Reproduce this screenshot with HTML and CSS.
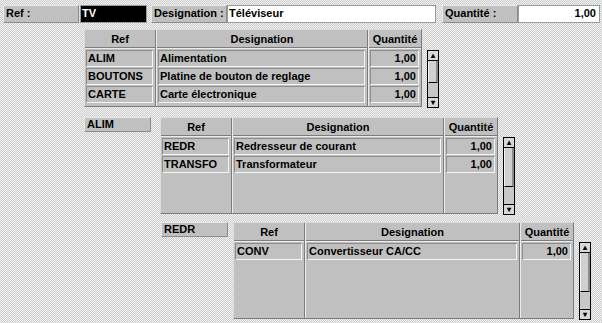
FILE: index.html
```html
<!DOCTYPE html>
<html lang="fr">
<head>
  <meta charset="UTF-8" />
  <title>Nomenclature</title>
  <link rel="stylesheet" href="styles.css">
</head>
<body>
  <div class="topbar">
    <div class="label w-ref">Ref :</div>
    <div class="field dark w-tv">TV</div>
    <div class="label w-des">Designation :</div>
    <div class="field w-desval">Téléviseur</div>
    <div class="label w-qte">Quantité :</div>
    <div class="field num w-qteval">1,00</div>
  </div>

  <!-- niveau 1 -->
  <div class="level lvl1">
    <div class="tbl t1">
      <div class="col c-ref">
        <div class="head">Ref</div>
        <div class="cell">ALIM</div>
        <div class="cell">BOUTONS</div>
        <div class="cell">CARTE</div>
      </div>
      <div class="col c-des">
        <div class="head">Designation</div>
        <div class="cell">Alimentation</div>
        <div class="cell">Platine de bouton de reglage</div>
        <div class="cell">Carte électronique</div>
      </div>
      <div class="col c-qte">
        <div class="head">Quantité</div>
        <div class="cell num">1,00</div>
        <div class="cell num">1,00</div>
        <div class="cell num">1,00</div>
      </div>
    </div>
    <div class="scroll s1">
      <div class="arrow">&#9652;</div>
      <div class="thumb"></div>
      <div class="track"></div>
      <div class="arrow">&#9662;</div>
    </div>
  </div>

  <!-- niveau 2 -->
  <div class="level lvl2">
    <div class="label tag">ALIM</div>
    <div class="tbl t2">
      <div class="col c-ref">
        <div class="head">Ref</div>
        <div class="cell">REDR</div>
        <div class="cell">TRANSFO</div>
      </div>
      <div class="col c-des">
        <div class="head">Designation</div>
        <div class="cell">Redresseur de courant</div>
        <div class="cell">Transformateur</div>
      </div>
      <div class="col c-qte">
        <div class="head">Quantité</div>
        <div class="cell num">1,00</div>
        <div class="cell num">1,00</div>
      </div>
    </div>
    <div class="scroll s2">
      <div class="arrow">&#9652;</div>
      <div class="thumb"></div>
      <div class="track"></div>
      <div class="arrow">&#9662;</div>
    </div>
  </div>

  <!-- niveau 3 -->
  <div class="level lvl3">
    <div class="label tag">REDR</div>
    <div class="tbl t3">
      <div class="col c-ref">
        <div class="head">Ref</div>
        <div class="cell">CONV</div>
      </div>
      <div class="col c-des">
        <div class="head">Designation</div>
        <div class="cell">Convertisseur CA/CC</div>
      </div>
      <div class="col c-qte">
        <div class="head">Quantité</div>
        <div class="cell num">1,00</div>
      </div>
    </div>
    <div class="scroll s2">
      <div class="arrow">&#9652;</div>
      <div class="thumb"></div>
      <div class="track"></div>
      <div class="arrow">&#9662;</div>
    </div>
  </div>
</body>
</html>
```

FILE: styles.css
```css
body {
  margin: 0;
  font-family: "Liberation Sans", Arial, sans-serif;
  font-size: 11px;
  font-weight: bold;
  color: #000;
  background: repeating-conic-gradient(#cdcdcd 0 25%, #f2f2f2 0 50%) 0 0 / 2px 2px;
  height: 323px;
  overflow: hidden;
}
.topbar {
  display: flex;
  align-items: center;
  padding: 5px 0 0 3px;
  height: 18px;
}
.label {
  box-sizing: border-box;
  height: 18px;
  line-height: 15px;
  padding-left: 2px;
  background: #c0c0c0;
  border: 1px solid;
  border-color: #e8e8e8 #8c8c8c #8c8c8c #e8e8e8;
}
.field {
  box-sizing: border-box;
  height: 18px;
  line-height: 15px;
  padding: 0 3px 0 1px;
  background: #fff;
  border: 1px solid #9a9a9a;
}
.field.dark {
  background: #000;
  color: #fff;
}
.num { text-align: right; }
.w-ref { width: 76px; }
.w-tv { width: 67px; margin-left: 1px; }
.w-des { width: 76px; margin-left: 4px; }
.w-desval { width: 209px; }
.w-qte { width: 76px; margin-left: 6px; }
.w-qteval { width: 82px; }

.level {
  display: flex;
  align-items: flex-start;
}
.lvl1 { margin: 6px 0 0 84px; }
.lvl2 { margin: 9px 0 0 84px; }
.lvl3 { margin: 7px 0 0 161px; }
.tag {
  width: 67px;
  height: 15px;
  line-height: 12px;
  margin-right: 9px;
}
.lvl3 .tag { margin-right: 5px; }

.tbl {
  display: flex;
  background: #c0c0c0;
  border: 1px solid;
  border-color: #dcdcdc #7c7c7c #7c7c7c #dcdcdc;
}
.t1 { height: 76px; }
.t2, .t3 { height: 95px; }
.col {
  display: flex;
  flex-direction: column;
}
.col + .col {
  border-left: 1px solid #7c7c7c;
  box-shadow: inset 1px 0 #ececec;
  padding-left: 1px;
}
.c-ref { width: 70px; }
.c-des { width: 210px; }
.c-qte { width: 52px; }
.t3 .c-des { width: 213px; }
.head {
  height: 17px;
  line-height: 18px;
  text-align: center;
  border-bottom: 1px solid #7c7c7c;
  box-shadow: 0 1px #ececec;
  margin-bottom: 2px;
}
.cell {
  height: 15px;
  line-height: 15px;
  margin: 0 2px 1px 1px;
  padding: 0 2px 0 1px;
  border: 1px solid;
  border-color: #8c8c8c #f4f4f4 #f4f4f4 #8c8c8c;
  white-space: nowrap;
  overflow: hidden;
}

.scroll {
  box-sizing: border-box;
  width: 12px;
  margin-left: 5px;
  display: flex;
  flex-direction: column;
  border: 1px solid #000;
  background: #c0c0c0;
}
.s1 { height: 58px; margin-top: 21px; }
.s2 { height: 78px; margin-top: 20px; }
.arrow {
  height: 9px;
  line-height: 9px;
  font-size: 8px;
  text-align: center;
  background: #d8d8d8;
  border-bottom: 1px solid #000;
}
.arrow:last-child {
  border-bottom: none;
  border-top: 1px solid #000;
}
.thumb {
  background: #d0d0d0;
  border-right: 2px solid #8c8c8c;
  border-left: 1px solid #f4f4f4;
  border-bottom: 1px solid #000;
}
.s1 .thumb { height: 21px; }
.s2 .thumb { height: 38px; }
.track { flex: 1; background: #c8c8c8; }
```
